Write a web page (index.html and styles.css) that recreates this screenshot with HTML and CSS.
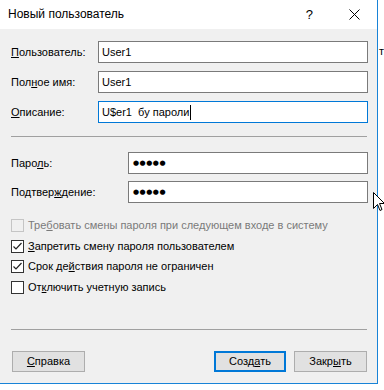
FILE: index.html
```html
<!DOCTYPE html>
<html lang="ru">
<head>
<meta charset="utf-8">
<link rel="stylesheet" href="styles.css">
</head>
<body>
<div class="dialog">
  <div class="titlebar">
    <span class="title">Новый пользователь</span>
    <span class="help">?</span>
    <svg class="close" width="11" height="11" viewBox="0 0 11 11"><path d="M0.5 0.5 L10.5 10.5 M10.5 0.5 L0.5 10.5" stroke="#000" stroke-width="1" fill="none"/></svg>
  </div>
  <div class="content">
    <div class="form-grid">
      <label class="lbl"><u>П</u>ользователь:</label>
      <div class="input">User1</div>
      <label class="lbl">Пол<u>н</u>ое имя:</label>
      <div class="input">User1</div>
      <label class="lbl"><u>О</u>писание:</label>
      <div class="input focused">U$er1&nbsp; бу пароли<span class="caret"></span></div>
    </div>
    <div class="sep sep-top"></div>
    <div class="form-grid pw-grid">
      <label class="lbl">Паро<u>л</u>ь:</label>
      <div class="input pw">●●●●●</div>
      <label class="lbl">Подтвер<u>ж</u>дение:</label>
      <div class="input pw">●●●●●</div>
    </div>
    <div class="checks">
      <div class="check disabled"><span class="box"></span>Тре<u>б</u>овать смены пароля при следующем входе в систему</div>
      <div class="check"><span class="box"><svg width="11" height="11" viewBox="0 0 11 11"><path d="M1.5 5.5 L4 8 L9.5 2" stroke="#222" stroke-width="1.2" fill="none"/></svg></span><u>З</u>апретить смену пароля пользователем</div>
      <div class="check"><span class="box"><svg width="11" height="11" viewBox="0 0 11 11"><path d="M1.5 5.5 L4 8 L9.5 2" stroke="#222" stroke-width="1.2" fill="none"/></svg></span>Срок де<u>й</u>ствия пароля не ограничен</div>
      <div class="check"><span class="box"></span>От<u>к</u>лючить учетную запись</div>
    </div>
    <div class="sep sep-bottom"></div>
    <div class="buttons">
      <button class="btn"><u>С</u>правка</button>
      <div class="right-buttons">
        <button class="btn default">Созд<u>а</u>ть</button>
        <button class="btn">Закр<u>ы</u>ть</button>
      </div>
    </div>
  </div>
</div>
<span class="behind-text">т</span>
<svg class="cursor" width="12" height="20" viewBox="0 0 12 20"><path d="M0.5 0.5 L0.5 16.5 L4.5 12.5 L7 18.5 L9 17.5 L6.5 11.5 L11.5 11.5 Z" fill="#fff" stroke="#000" stroke-width="1"/></svg>
</body>
</html>
```
FILE: styles.css
```css
html, body {
  margin: 0;
  padding: 0;
  background: #fff;
  width: 384px;
  height: 390px;
  overflow: hidden;
  position: relative;
  font-family: "Liberation Sans", Arial, sans-serif;
  font-size: 11px;
  color: #000;
}

.dialog {
  width: 377px;
  height: 383px;
  border-right: 1px solid #1883d7;
  border-bottom: 1px solid #1883d7;
  background: #f0f0f0;
  display: flex;
  flex-direction: column;
}

.titlebar {
  height: 29px;
  flex: none;
  background: #fff;
  display: flex;
  align-items: center;
  padding-left: 8px;
}

.title {
  font-size: 12px;
  flex: 1;
  padding-bottom: 1px;
}

.help {
  font-size: 13px;
  margin-right: 36px;
  padding-bottom: 1px;
}

.close {
  margin-right: 17px;
}

.content {
  flex: 1;
  padding: 12px 9px 0 11px;
  display: flex;
  flex-direction: column;
}

.form-grid {
  display: grid;
  grid-template-columns: 87px 1fr;
  grid-auto-rows: 22px;
  row-gap: 8px;
  align-items: center;
}

.pw-grid {
  grid-template-columns: 117px 1fr;
  row-gap: 7px;
  margin-top: 15px;
}

u {
  text-decoration: underline;
  text-underline-offset: 1px;
}

.input {
  height: 22px;
  box-sizing: border-box;
  border: 1px solid #7a7a7a;
  background: #fff;
  padding-left: 3px;
  display: flex;
  align-items: center;
  white-space: nowrap;
}

.input.focused {
  border-color: #0078d7;
}

.caret {
  display: inline-block;
  width: 1px;
  height: 15px;
  background: #000;
  margin-left: 1px;
}

.input.pw {
  font-family: "DejaVu Sans", sans-serif;
  font-size: 7px;
  letter-spacing: 0.5px;
  padding-left: 4px;
}

.sep {
  height: 1px;
  background: #a0a0a0;
  margin-right: 1px;
}

.sep-top {
  margin-top: 13px;
}

.checks {
  margin-top: 16px;
  display: flex;
  flex-direction: column;
  gap: 7.5px;
}

.check {
  height: 13px;
  display: flex;
  align-items: center;
  white-space: nowrap;
  line-height: 13px;
}

.box {
  width: 13px;
  height: 13px;
  box-sizing: border-box;
  border: 1px solid #333;
  background: #fff;
  margin-right: 4px;
  display: flex;
  align-items: center;
  justify-content: center;
  flex: none;
}

.check.disabled {
  color: #7a7a7a;
}

.check.disabled .box {
  border-color: #c5c5c5;
  background: #f0f0f0;
}

.sep-bottom {
  margin-top: 35px;
}

.buttons {
  margin-top: 21px;
  display: flex;
  justify-content: space-between;
  padding-left: 1px;
  padding-right: 1px;
}

.right-buttons {
  display: flex;
  gap: 8px;
}

.btn {
  width: 73px;
  height: 21px;
  box-sizing: border-box;
  border: 1px solid #adadad;
  background: #e1e1e1;
  font-family: "Liberation Sans", Arial, sans-serif;
  font-size: 11px;
  color: #000;
  padding: 0;
}

.btn.default {
  width: 72px;
  border: 2px solid #0078d7;
}

.behind-text {
  position: absolute;
  left: 379px;
  top: 45px;
  font-size: 11px;
}

.cursor {
  position: absolute;
  left: 373px;
  top: 192px;
}
```
